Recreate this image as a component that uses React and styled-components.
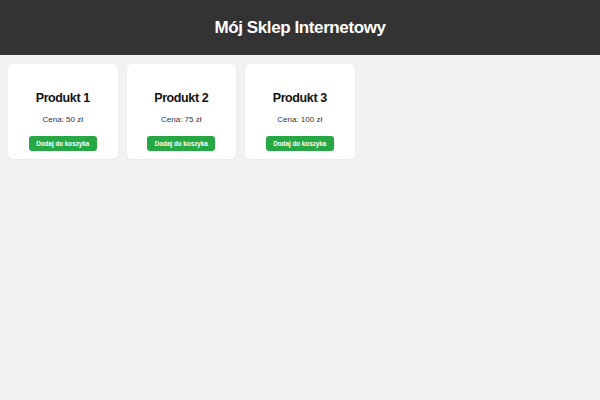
import { createGlobalStyle, styled } from 'styled-components';

const GlobalStyle = createGlobalStyle`
  html, body {
    margin: 0;
    padding: 0;
    background: #f2f2f2;
    font-family: "Liberation Sans", Arial, sans-serif;
  }
`;

const Header = styled.header`
  box-sizing: border-box;
  height: 55px;
  padding-top: 1px;
  background: #333333;
  display: flex;
  align-items: center;
  justify-content: center;
`;

const Title = styled.h1`
  margin: 0;
  color: #ffffff;
  font-size: 17px;
  font-weight: 700;
  letter-spacing: -0.4px;
  line-height: 20px;
`;

const Products = styled.main`
  display: flex;
  gap: 9px;
  padding: 9px 8px;
`;

const Card = styled.div`
  box-sizing: border-box;
  width: 109.5px;
  height: 95px;
  padding-top: 27px;
  background: #ffffff;
  border-radius: 5px;
  box-shadow: 0 1px 3px rgba(0, 0, 0, 0.05);
  display: flex;
  flex-direction: column;
  align-items: center;
`;

const Name = styled.h2`
  margin: 0;
  font-size: 12.5px;
  font-weight: 700;
  letter-spacing: -0.4px;
  line-height: 14px;
  color: #111111;
`;

const Price = styled.p`
  margin: 10px 0 0;
  font-size: 8px;
  line-height: 10px;
  color: #333333;
`;

const AddButton = styled.button`
  margin-top: 10.5px;
  height: 15.5px;
  padding: 0 7.5px;
  border: none;
  border-radius: 3px;
  background: #28a745;
  color: #ffffff;
  font-family: inherit;
  font-size: 6.3px;
  font-weight: 700;
  cursor: pointer;
`;

const products = [
  { name: 'Produkt 1', price: 50 },
  { name: 'Produkt 2', price: 75 },
  { name: 'Produkt 3', price: 100 },
];

export default function App() {
  return (
    <>
      <GlobalStyle />
      <Header>
        <Title>Mój Sklep Internetowy</Title>
      </Header>
      <Products>
        {products.map((p) => (
          <Card key={p.name}>
            <Name>{p.name}</Name>
            <Price>Cena: {p.price} zł</Price>
            <AddButton>Dodaj do koszyka</AddButton>
          </Card>
        ))}
      </Products>
    </>
  );
}
